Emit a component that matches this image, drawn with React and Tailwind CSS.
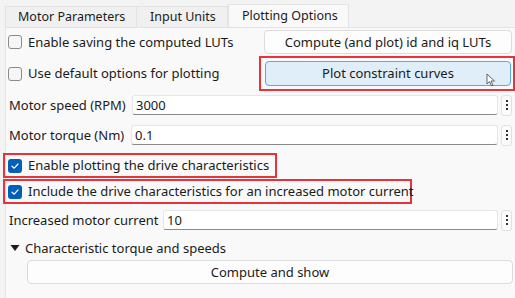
import React from "react";

const Check = ({ checked }) =>
  checked ? (
    <span className="flex h-[14px] w-[14px] shrink-0 items-center justify-center rounded-[3px] bg-[#005fb8]">
      <svg width="10" height="10" viewBox="0 0 10 10" fill="none">
        <path d="M2 5.2 L4.2 7.2 L8 3" stroke="white" strokeWidth="1.2" strokeLinecap="round" strokeLinejoin="round" />
      </svg>
    </span>
  ) : (
    <span className="h-[14px] w-[14px] shrink-0 rounded-[3px] border border-[#8b8b8b] bg-[#f6f6f6]" />
  );

const Kebab = () => (
  <div className="flex h-[21px] w-[11px] shrink-0 flex-col items-center justify-center gap-[2px] rounded-[3px] border border-[#e2e2e2] bg-[#fbfbfb]">
    <span className="h-[2px] w-[2px] bg-[#333]" />
    <span className="h-[2px] w-[2px] bg-[#333]" />
    <span className="h-[2px] w-[2px] bg-[#333]" />
  </div>
);

const Field = ({ label, value, labelW }) => (
  <div className="flex h-[22px] items-center pl-[3px] pr-[3px]">
    <span className={"shrink-0 whitespace-nowrap " + labelW}>{label}</span>
    <div className="flex h-[20px] flex-1 items-center rounded-[3px] border border-[#e6e6e6] border-b-[#8a8a8a] bg-white pl-[3px]">
      {value}
    </div>
    <div className="ml-[3px]">
      <Kebab />
    </div>
  </div>
);

const Btn = ({ children, className = "" }) => (
  <div
    className={
      "flex h-[24px] items-center justify-center whitespace-nowrap rounded-[4px] border border-[#dcdcdc] bg-[#fdfdfd] " + className
    }
  >
    {children}
  </div>
);

export default function App() {
  return (
    <div className="h-[298px] w-[515px] overflow-hidden bg-[#f3f3f3] font-['Segoe_UI','Noto_Sans',sans-serif] text-[13px] leading-none text-[#1b1b1b]">
      {/* tabs */}
      <div className="flex h-[27px] items-end pl-[5px] text-[12.5px]">
        <div className="flex h-[21px] w-[132px] items-center whitespace-nowrap border border-b-0 border-[#e3e3e3] bg-[#f0f0f0] pl-[12px]">
          Motor Parameters
        </div>
        <div className="flex h-[21px] w-[91px] items-center whitespace-nowrap border border-b-0 border-l-0 border-[#e3e3e3] bg-[#f0f0f0] pl-[13px]">
          Input Units
        </div>
        <div className="flex h-[23px] w-[121px] items-center whitespace-nowrap border border-b-0 border-[#e3e3e3] bg-[#f9f9f9] pl-[13px]">
          Plotting Options
        </div>
      </div>
      {/* panel */}
      <div className="ml-[5px] flex h-[271px] flex-col border-l border-t border-[#e3e3e3] bg-[#f9f9f9] pt-[2px]">
        {/* row 1 */}
        <div className="flex h-[24px] items-center">
          <div className="flex flex-1 items-center gap-[6px] whitespace-nowrap pl-[2px]">
            <Check />
            <span>Enable saving the computed LUTs</span>
          </div>
          <Btn className="mr-[3px] w-[248px] shrink-0">Compute (and plot) id and iq LUTs</Btn>
        </div>
        {/* row 2 */}
        <div className="mt-[2px] flex h-[35px] items-center">
          <div className="flex flex-1 items-center gap-[6px] whitespace-nowrap pl-[2px]">
            <Check />
            <span>Use default options for plotting</span>
          </div>
          <div className="flex h-[35px] w-[256px] shrink-0 items-center border-2 border-[#e8333a] pl-[4px] pr-[2px]">
            <div className="relative flex h-[25px] w-full items-center justify-center whitespace-nowrap rounded-[4px] border border-[#5ea6e6] bg-[#e0eef9]">
              Plot constraint curves
              <svg className="absolute right-[14px] top-[11px]" width="10" height="14" viewBox="0 0 10 14">
                <path d="M1 1 L1 11 L3.5 8.6 L5.5 13 L7 12.3 L5 8 L8.5 8 Z" fill="white" stroke="#555" strokeWidth="0.9" strokeLinejoin="round" />
              </svg>
            </div>
          </div>
        </div>
        <div className="mt-[3px]">
          <Field label="Motor speed (RPM)" value="3000" labelW="w-[123px]" />
        </div>
        <div className="mt-[8px]">
          <Field label="Motor torque (Nm)" value="0.1" labelW="w-[122px]" />
        </div>
        <div className="ml-[-3px] mt-[7px] flex h-[25px] w-[274px] items-center gap-[6px] whitespace-nowrap border-2 border-[#e8333a] pl-[3px]">
          <Check checked />
          <span>Enable plotting the drive characteristics</span>
        </div>
        <div className="ml-[-3px] mt-[1px] flex h-[25px] w-[409px] items-center gap-[6px] whitespace-nowrap border-2 border-[#e8333a] pl-[3px]">
          <Check checked />
          <span>Include the drive characteristics for an increased motor current</span>
        </div>
        <div className="mt-[5px]">
          <Field label="Increased motor current" value="10" labelW="w-[154px]" />
        </div>
        <div className="mt-[7px] flex h-[20px] items-center gap-[5px] whitespace-nowrap pl-[4px]">
          <svg width="10" height="8" viewBox="0 0 10 8">
            <path d="M0.5 1 L9.5 1 L5 7 Z" fill="#1b1b1b" />
          </svg>
          <span>Characteristic torque and speeds</span>
        </div>
        <div className="mt-[2px] pl-[21px] pr-[2px]">
          <Btn className="h-[23px]">Compute and show</Btn>
        </div>
      </div>
    </div>
  );
}
